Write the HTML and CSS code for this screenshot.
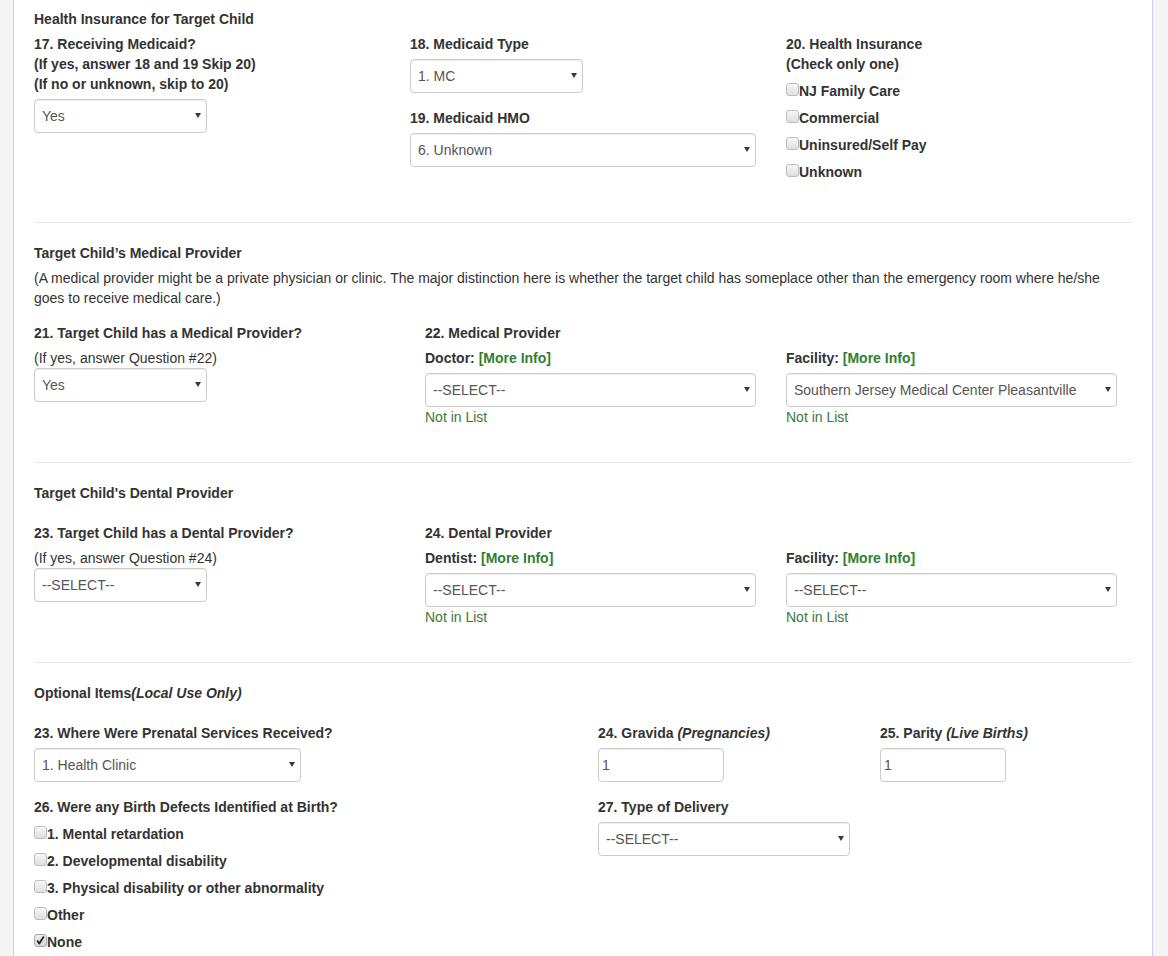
FILE: index.html
```html
<!DOCTYPE html>
<html lang="en">
<head>
<meta charset="utf-8">
<title>Health Insurance for Target Child</title>
<link rel="stylesheet" href="styles.css">
</head>
<body>
<div class="panel">

  <section class="sec">
    <div class="lbl">Health Insurance for Target Child</div>
    <div class="cols3">
      <div class="col">
        <label class="lbl">17. Receiving Medicaid?<br>(If yes, answer 18 and 19 Skip 20)<br>(If no or unknown, skip to 20)</label>
        <div class="sel half"><select><option>Yes</option></select></div>
      </div>
      <div class="col">
        <div class="group">
          <label class="lbl">18. Medicaid Type</label>
          <div class="sel half"><select><option>1. MC</option></select></div>
        </div>
        <div class="group">
          <label class="lbl">19. Medicaid HMO</label>
          <div class="sel"><select><option>6. Unknown</option></select></div>
        </div>
      </div>
      <div class="col">
        <label class="lbl">20. Health Insurance<br>(Check only one)</label>
        <div class="checks last">
          <div class="opt"><span class="cb"></span>NJ Family Care</div>
          <div class="opt"><span class="cb"></span>Commercial</div>
          <div class="opt"><span class="cb"></span>Uninsured/Self Pay</div>
          <div class="opt"><span class="cb"></span>Unknown</div>
        </div>
      </div>
    </div>
  </section>

  <hr class="rule">

  <section class="sec">
    <div class="group">
      <div class="lbl">Target Child’s Medical Provider</div>
      <p class="note">(A medical provider might be a private physician or clinic. The major distinction here is whether the target child has someplace other than the emergency room where he/she goes to receive medical care.)</p>
    </div>
    <div class="cols-prov group">
      <div class="col">
        <label class="lbl">21. Target Child has a Medical Provider?</label>
        <div class="hint">(If yes, answer Question #22)</div>
        <div class="sel half"><select><option>Yes</option></select></div>
      </div>
      <div class="col">
        <div class="pad"><label class="lbl">22. Medical Provider</label></div>
        <div class="halves">
          <div class="pad">
            <label class="lbl">Doctor: <a class="more">[More Info]</a></label>
            <div class="sel"><select><option>--SELECT--</option></select></div>
            <a class="nil">Not in List</a>
          </div>
          <div class="pad">
            <label class="lbl">Facility: <a class="more">[More Info]</a></label>
            <div class="sel"><select><option>Southern Jersey Medical Center Pleasantville</option></select></div>
            <a class="nil">Not in List</a>
          </div>
        </div>
      </div>
    </div>
  </section>

  <hr class="rule">

  <section class="sec">
    <div class="head">
      <div class="lbl">Target Child's Dental Provider</div>
    </div>
    <div class="cols-prov group">
      <div class="col">
        <label class="lbl">23. Target Child has a Dental Provider?</label>
        <div class="hint">(If yes, answer Question #24)</div>
        <div class="sel half"><select><option>--SELECT--</option></select></div>
      </div>
      <div class="col">
        <div class="pad"><label class="lbl">24. Dental Provider</label></div>
        <div class="halves">
          <div class="pad">
            <label class="lbl">Dentist: <a class="more">[More Info]</a></label>
            <div class="sel"><select><option>--SELECT--</option></select></div>
            <a class="nil">Not in List</a>
          </div>
          <div class="pad">
            <label class="lbl">Facility: <a class="more">[More Info]</a></label>
            <div class="sel"><select><option>--SELECT--</option></select></div>
            <a class="nil">Not in List</a>
          </div>
        </div>
      </div>
    </div>
  </section>

  <hr class="rule">

  <section class="sec">
    <div class="head">
      <div class="lbl">Optional Items<em>(Local Use Only)</em></div>
    </div>
    <div class="cols2">
      <div class="group">
        <label class="lbl">23. Where Were Prenatal Services Received?</label>
        <div class="sel half"><select><option>1. Health Clinic</option></select></div>
      </div>
      <div class="cols2">
        <div class="group">
          <label class="lbl">24. Gravida <em>(Pregnancies)</em></label>
          <input class="txt" type="text" value="1">
        </div>
        <div class="group">
          <label class="lbl">25. Parity <em>(Live Births)</em></label>
          <input class="txt" type="text" value="1">
        </div>
      </div>
    </div>
    <div class="cols2">
      <div class="col">
        <label class="lbl">26. Were any Birth Defects Identified at Birth?</label>
        <div class="checks">
          <div class="opt"><span class="cb"></span>1. Mental retardation</div>
          <div class="opt"><span class="cb"></span>2. Developmental disability</div>
          <div class="opt"><span class="cb"></span>3. Physical disability or other abnormality</div>
          <div class="opt"><span class="cb"></span>Other</div>
          <div class="opt"><span class="cb on"><svg viewBox="0 0 13 13" width="13" height="13"><path d="M3.2 6.6 L5.3 9.6 L9.8 2.6" fill="none" stroke="#222" stroke-width="1.8" stroke-linejoin="round"/></svg></span>None</div>
        </div>
      </div>
      <div class="cols2">
        <div class="group">
          <label class="lbl">27. Type of Delivery</label>
          <div class="sel"><select><option>--SELECT--</option></select></div>
        </div>
      </div>
    </div>
  </section>

</div>
</body>
</html>
```

FILE: styles.css
```css
html, body {
  margin: 0;
  padding: 0;
  height: 100%;
  overflow: hidden;
}

body {
  background: #f4f4f4;
  font-family: "Liberation Sans", Arial, Helvetica, sans-serif;
  font-size: 14px;
  line-height: 20px;
  color: #333;
}

.panel {
  box-sizing: border-box;
  height: 100%;
  margin: 0 15px 0 13px;
  padding: 9px 20px 0;
  background: #fff;
  border-left: 1px solid #ccccff;
  border-right: 1px solid #ccccff;
  overflow: hidden;
}

.sec {
  display: flow-root;
}

.lbl {
  display: block;
  font-weight: bold;
  margin-bottom: 5px;
}

.lbl em {
  font-style: italic;
}

.group {
  margin-bottom: 15px;
}

.head {
  margin-bottom: 20px;
}

.note {
  margin: 0;
}

.hint {
  line-height: 20px;
}

.rule {
  border: 0;
  border-top: 1px solid #e6e6e6;
  height: 0;
  margin: 20px 0;
}

.cols3 {
  display: grid;
  grid-template-columns: repeat(3, 1fr);
  column-gap: 30px;
}

.cols-prov {
  display: grid;
  grid-template-columns: 346px 1fr;
  column-gap: 30px;
}

.halves {
  display: grid;
  grid-template-columns: 1fr 1fr;
}

.pad {
  padding: 0 15px;
}

.cols2 {
  display: grid;
  grid-template-columns: 1fr 1fr;
  column-gap: 30px;
}

/* select */
.sel {
  position: relative;
  width: 100%;
}

.sel.half {
  width: 50%;
}

.sel select {
  display: block;
  box-sizing: border-box;
  width: 100%;
  height: 34px;
  margin: 0;
  padding: 0 20px 0 7px;
  font-family: inherit;
  font-size: 14px;
  color: #555;
  background: #fff;
  border: 1px solid #ccc;
  border-radius: 4px;
  box-shadow: inset 0 1px 1px rgba(0, 0, 0, 0.075);
  -webkit-appearance: none;
  appearance: none;
  outline: none;
}

.sel::after {
  content: "";
  position: absolute;
  right: 6px;
  top: 14px;
  width: 0;
  height: 0;
  border-left: 3px solid transparent;
  border-right: 3px solid transparent;
  border-top: 5px solid #3a3a3a;
  pointer-events: none;
}

.txt {
  display: block;
  box-sizing: border-box;
  width: 50%;
  height: 34px;
  margin: 0;
  padding: 0 3px;
  font-family: inherit;
  font-size: 14px;
  color: #555;
  background: #fff;
  border: 1px solid #ccc;
  border-radius: 4px;
  box-shadow: inset 0 1px 1px rgba(0, 0, 0, 0.075);
  outline: none;
}

.more {
  color: #2f7f2f;
  text-decoration: none;
}

.nil {
  display: block;
  color: #3c763d;
  text-decoration: none;
  line-height: 20px;
}

/* checkboxes */
.checks {
  padding-top: 2px;
}

.checks.last {
  margin-bottom: 20px;
}

.opt {
  display: flex;
  align-items: flex-start;
  font-weight: bold;
  line-height: 20px;
  margin-bottom: 7px;
}

.checks .opt:last-child {
  margin-bottom: 0;
}

.cb {
  flex: none;
  box-sizing: border-box;
  width: 13px;
  height: 13px;
  margin-top: 2px;
  border: 1px solid #bdbdbd;
  border-radius: 3px;
  background: linear-gradient(#f8f8f8, #dedede);
  position: relative;
}

.cb.on {
  background: linear-gradient(#eeeeee, #d6d6d6);
  border-color: #aaa;
}

.cb svg {
  position: absolute;
  left: -1px;
  top: -1px;
}
```
